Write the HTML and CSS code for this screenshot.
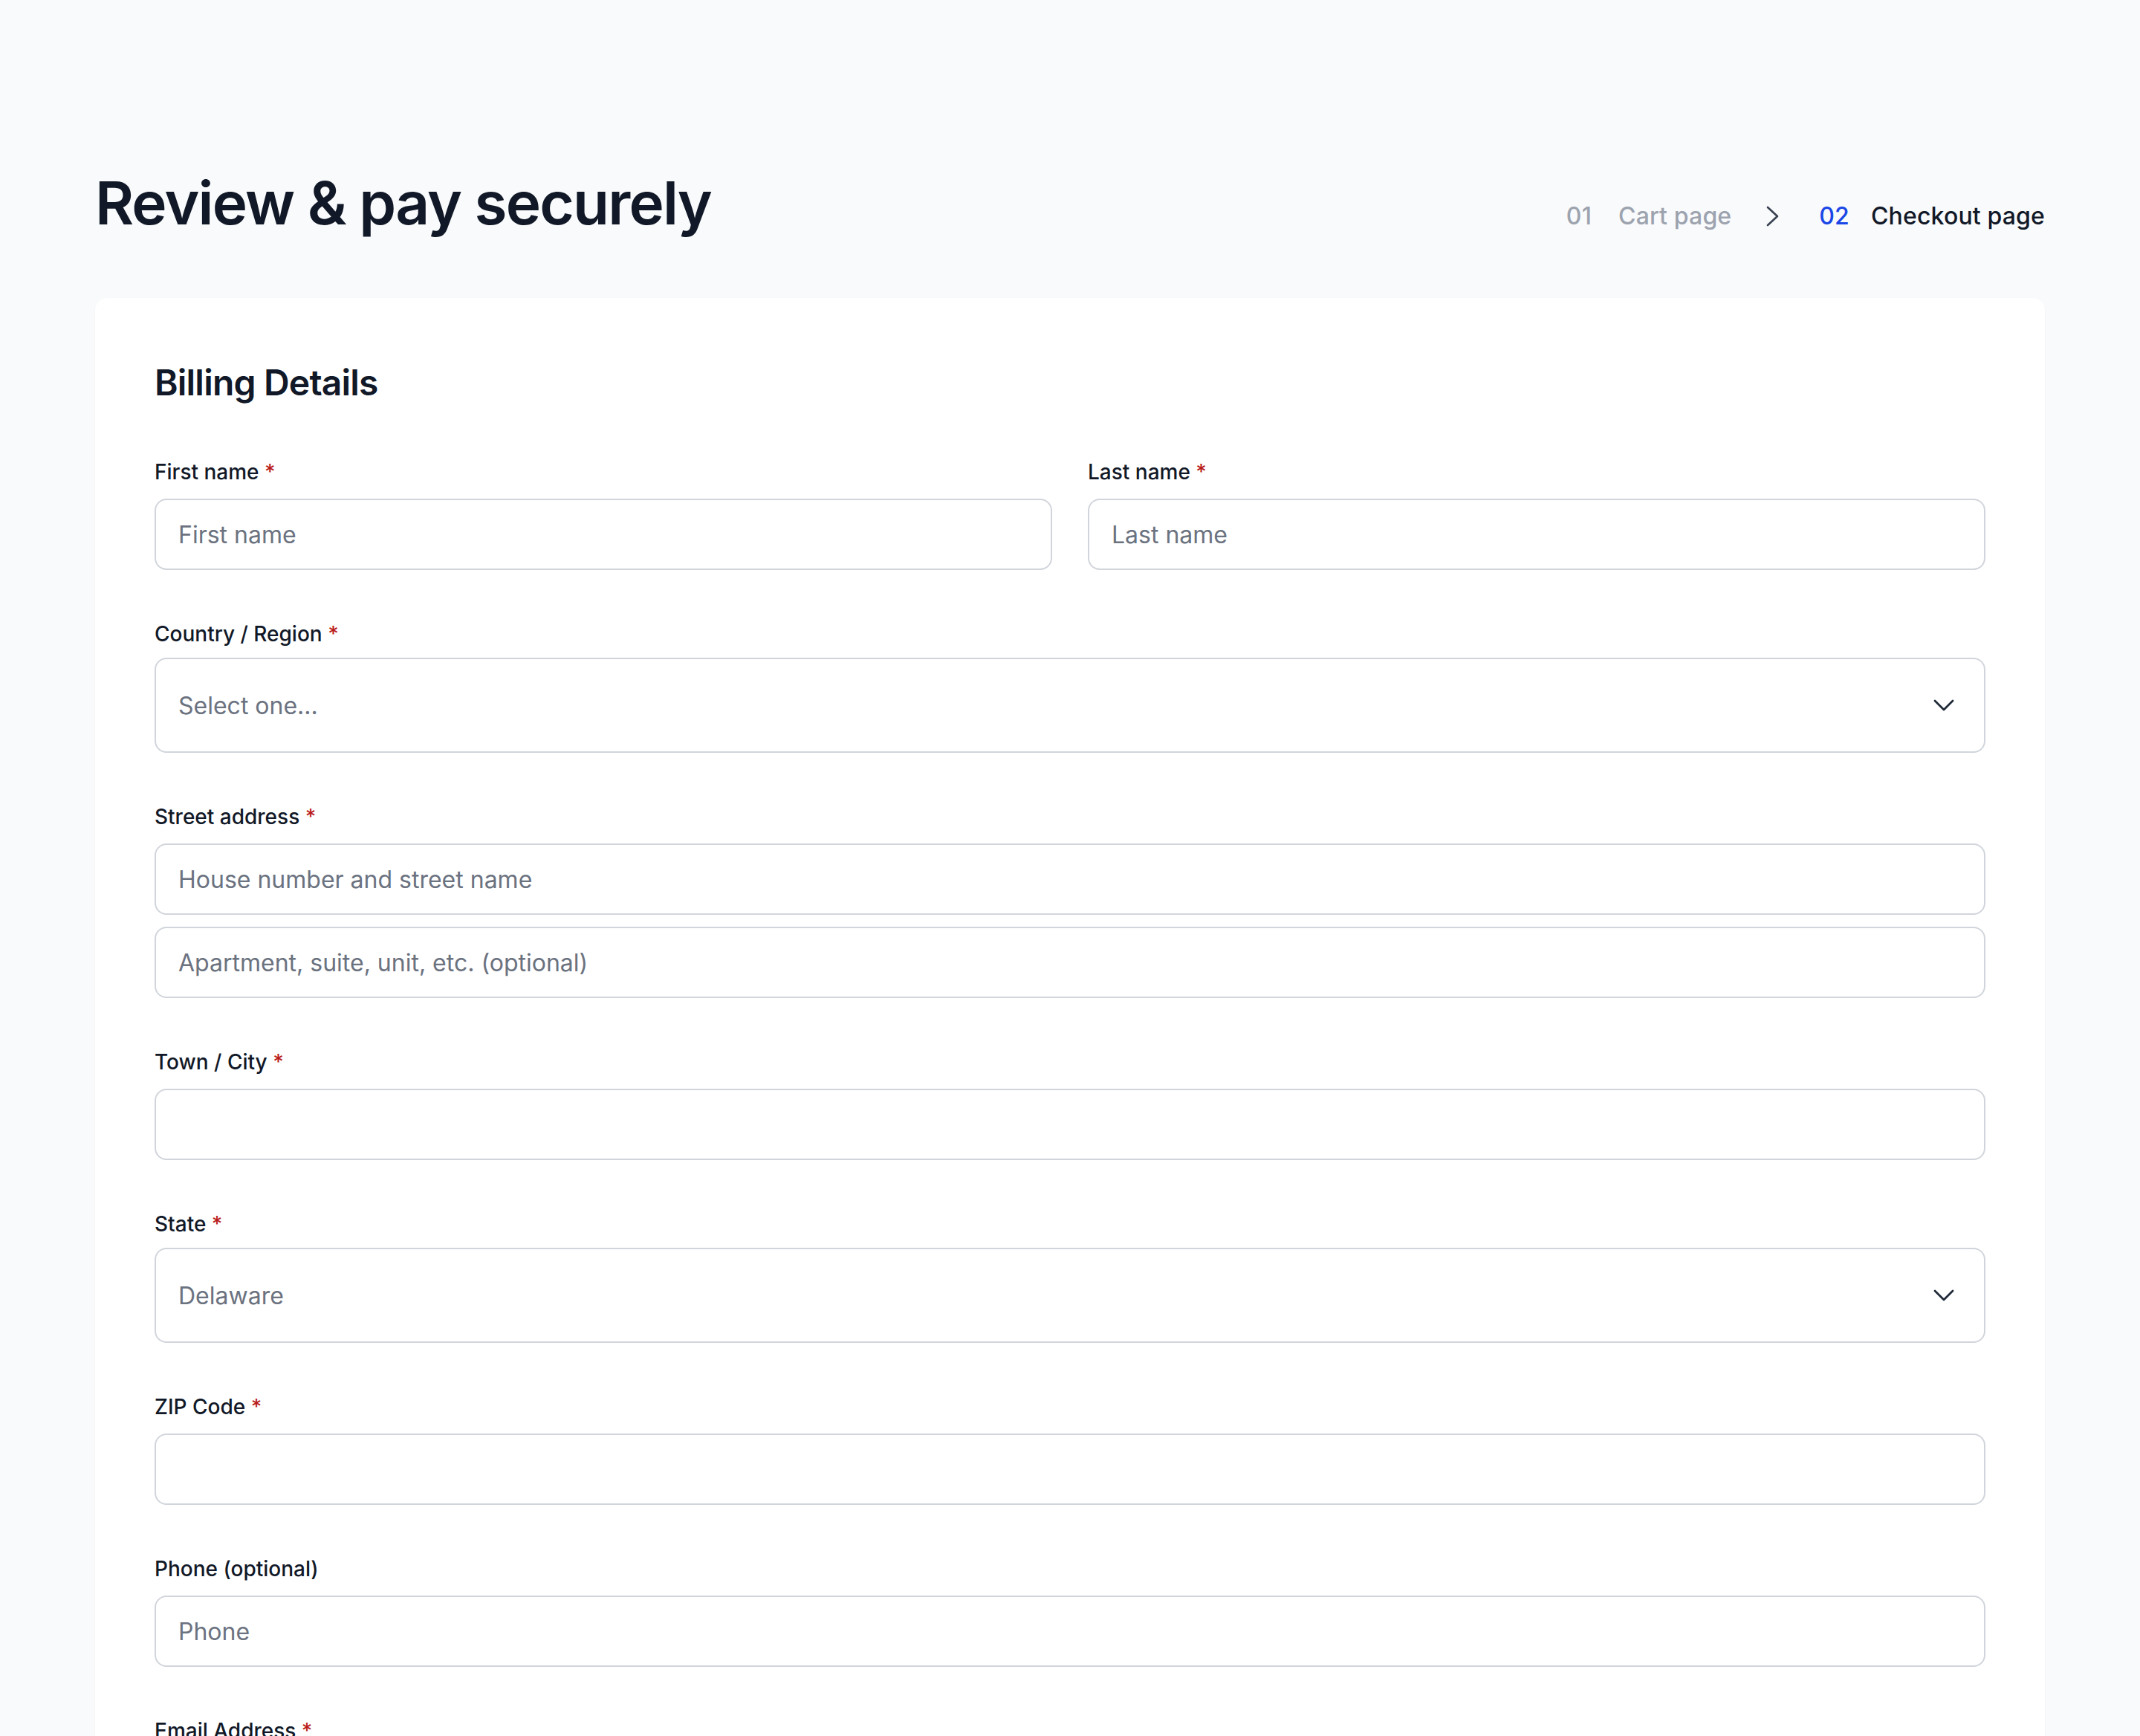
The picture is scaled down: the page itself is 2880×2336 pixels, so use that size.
FILE: index.html
```html
<!DOCTYPE html>
<html lang="en">
<head>
    <meta charset="UTF-8">
    <meta name="viewport" content="width=device-width, initial-scale=1.0">
    <title>Review &amp; pay securely</title>
    <link rel="stylesheet" href="styles.css">
</head>
<body>
    <div class="page">
        <header class="page-header">
            <h1 class="page-title">Review &amp; pay securely</h1>

            <nav class="steps">
                <span class="step">
                    <span class="step-num">01</span>
                    <span class="step-name">Cart page</span>
                </span>
                <svg class="step-arrow" width="32" height="32" viewBox="0 0 32 32" fill="none">
                    <path d="M9 4l13 12-13 12" stroke="#374151" stroke-width="2.6" stroke-linecap="round" stroke-linejoin="round"/>
                </svg>
                <span class="step active">
                    <span class="step-num">02</span>
                    <span class="step-name">Checkout page</span>
                </span>
            </nav>
        </header>

        <form class="card">
            <h2 class="card-title">Billing Details</h2>

            <div class="row">
                <div class="field">
                    <label class="label">First name <span class="req">*</span></label>
                    <input class="input" type="text" placeholder="First name">
                </div>
                <div class="field">
                    <label class="label">Last name <span class="req">*</span></label>
                    <input class="input" type="text" placeholder="Last name">
                </div>
            </div>

            <div class="field field-select">
                <label class="label">Country / Region <span class="req">*</span></label>
                <div class="select">
                    <select>
                        <option>Select one...</option>
                    </select>
                    <svg class="select-arrow" width="32" height="32" viewBox="0 0 32 32" fill="none">
                        <path d="M4 10l12 12 12-12" stroke="#1f2937" stroke-width="2.8" stroke-linecap="round" stroke-linejoin="round"/>
                    </svg>
                </div>
            </div>

            <div class="field">
                <label class="label">Street address <span class="req">*</span></label>
                <div class="stack">
                    <input class="input" type="text" placeholder="House number and street name">
                    <input class="input" type="text" placeholder="Apartment, suite, unit, etc. (optional)">
                </div>
            </div>

            <div class="field">
                <label class="label">Town / City <span class="req">*</span></label>
                <input class="input" type="text">
            </div>

            <div class="field field-select">
                <label class="label">State <span class="req">*</span></label>
                <div class="select">
                    <select>
                        <option>Delaware</option>
                    </select>
                    <svg class="select-arrow" width="32" height="32" viewBox="0 0 32 32" fill="none">
                        <path d="M4 10l12 12 12-12" stroke="#1f2937" stroke-width="2.8" stroke-linecap="round" stroke-linejoin="round"/>
                    </svg>
                </div>
            </div>

            <div class="field">
                <label class="label">ZIP Code <span class="req">*</span></label>
                <input class="input" type="text">
            </div>

            <div class="field">
                <label class="label">Phone (optional)</label>
                <input class="input" type="tel" placeholder="Phone">
            </div>

            <div class="field">
                <label class="label">Email Address <span class="req">*</span></label>
                <input class="input" type="email" placeholder="Email">
            </div>
        </form>
    </div>
</body>
</html>
```

FILE: styles.css
```css
* {
    box-sizing: border-box;
}

body {
    margin: 0;
    background: #f9fafb;
    font-family: Inter, "Noto Sans", sans-serif;
    color: #111827;
}

.page {
    padding: 225px 128px 128px;
}

.page-header {
    display: flex;
    justify-content: space-between;
    align-items: baseline;
    margin-bottom: 80px;
}

.page-title {
    margin: 0;
    font-size: 80px;
    line-height: 96px;
    font-weight: 600;
    letter-spacing: -1.8px;
    color: #111827;
}

.steps {
    display: flex;
    align-items: center;
    gap: 40px;
    font-size: 32px;
    line-height: 46px;
    font-weight: 500;
    letter-spacing: 0.15px;
}

.step {
    display: flex;
    gap: 36px;
    color: #9ca3af;
}

.step.active {
    gap: 29px;
}

.step.active .step-num {
    color: #1a47e6;
}

.step.active .step-name {
    color: #111827;
}

.step-arrow {
    display: block;
    margin-right: 6px;
}

.card {
    background: #fff;
    border-radius: 16px;
    padding: 80px;
    box-shadow: 0 1px 3px rgba(17, 24, 39, 0.03);
    display: flex;
    flex-direction: column;
    gap: 65px;
}

.card-title {
    margin: 0;
    font-size: 48px;
    line-height: 68px;
    font-weight: 600;
    letter-spacing: -0.8px;
    color: #111827;
}

.row {
    display: grid;
    grid-template-columns: 1fr 1fr;
    gap: 48px;
}

.field {
    display: flex;
    flex-direction: column;
    gap: 15px;
}

.field-select {
    gap: 11px;
}

.label {
    font-size: 28px;
    line-height: 42px;
    font-weight: 500;
    color: #111827;
}

.req {
    color: #b91c1c;
}

.stack {
    display: flex;
    flex-direction: column;
    gap: 16px;
}

.input {
    height: 96px;
    width: 100%;
    border: 2px solid #d1d5db;
    border-radius: 16px;
    padding: 0 30px;
    font-family: inherit;
    font-size: 32px;
    color: #111827;
    background: #fff;
    outline: none;
}

.input::placeholder {
    color: #6b7280;
}

.select {
    height: 128px;
    display: flex;
    align-items: center;
    border: 2px solid #d1d5db;
    border-radius: 16px;
    padding: 0 38px 0 0;
    background: #fff;
}

.select select {
    flex: 1;
    height: 100%;
    border: none;
    background: transparent;
    appearance: none;
    -webkit-appearance: none;
    padding: 0 30px;
    font-family: inherit;
    font-size: 32px;
    color: #6b7280;
    outline: none;
}

.select-arrow {
    display: block;
}
```
